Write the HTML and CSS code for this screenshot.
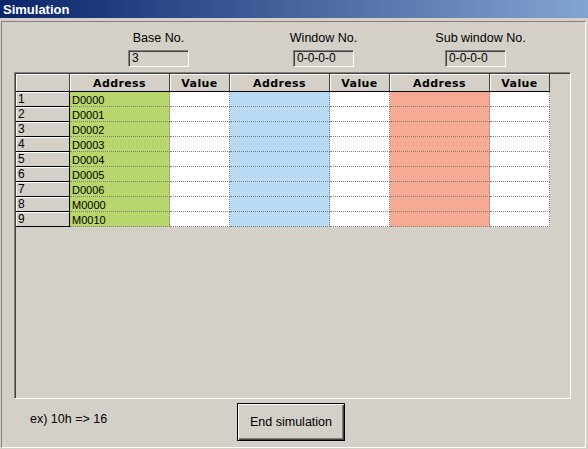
FILE: index.html
```html
<!DOCTYPE html>
<html>
<head>
<meta charset="utf-8">
<link rel="stylesheet" href="styles.css">
</head>
<body>
<div class="titlebar">Simulation</div>
<div class="panel">
  <div class="fields">
    <div class="field f-base">
      <div class="label">Base No.</div>
      <div class="box">3</div>
    </div>
    <div class="field f-win">
      <div class="label">Window No.</div>
      <div class="box">0-0-0-0</div>
    </div>
    <div class="field f-sub">
      <div class="label">Sub window No.</div>
      <div class="box">0-0-0-0</div>
    </div>
  </div>
  <div class="frame">
    <table class="grid">
      <thead>
        <tr>
          <th class="corner"></th>
          <th class="c-addr">Address</th>
          <th class="c-val">Value</th>
          <th class="c-addr">Address</th>
          <th class="c-val">Value</th>
          <th class="c-addr">Address</th>
          <th class="c-val">Value</th>
        </tr>
      </thead>
      <tbody>
        <tr><td class="rh">1</td><td class="g">D0000</td><td class="v"></td><td class="b"></td><td class="v"></td><td class="s"></td><td class="v"></td></tr>
        <tr><td class="rh">2</td><td class="g">D0001</td><td class="v"></td><td class="b"></td><td class="v"></td><td class="s"></td><td class="v"></td></tr>
        <tr><td class="rh">3</td><td class="g">D0002</td><td class="v"></td><td class="b"></td><td class="v"></td><td class="s"></td><td class="v"></td></tr>
        <tr><td class="rh">4</td><td class="g">D0003</td><td class="v"></td><td class="b"></td><td class="v"></td><td class="s"></td><td class="v"></td></tr>
        <tr><td class="rh">5</td><td class="g">D0004</td><td class="v"></td><td class="b"></td><td class="v"></td><td class="s"></td><td class="v"></td></tr>
        <tr><td class="rh">6</td><td class="g">D0005</td><td class="v"></td><td class="b"></td><td class="v"></td><td class="s"></td><td class="v"></td></tr>
        <tr><td class="rh">7</td><td class="g">D0006</td><td class="v"></td><td class="b"></td><td class="v"></td><td class="s"></td><td class="v"></td></tr>
        <tr><td class="rh">8</td><td class="g">M0000</td><td class="v"></td><td class="b"></td><td class="v"></td><td class="s"></td><td class="v"></td></tr>
        <tr><td class="rh">9</td><td class="g">M0010</td><td class="v"></td><td class="b"></td><td class="v"></td><td class="s"></td><td class="v"></td></tr>
      </tbody>
    </table>
  </div>
  <div class="bottom">
    <div class="hint">ex) 10h =&gt; 16</div>
    <div class="btn">End simulation</div>
  </div>
</div>
</body>
</html>
```

FILE: styles.css
```css
html, body {
  margin: 0;
  padding: 0;
}
body {
  width: 588px;
  height: 449px;
  overflow: hidden;
  background: #d4d0c8;
  font-family: "Liberation Sans", Arial, sans-serif;
  color: #000;
}
.titlebar {
  height: 18px;
  line-height: 19px;
  padding-left: 3px;
  background: linear-gradient(to right, #0a246a 0px, #a6caf0 760px);
  color: #fff;
  font-weight: bold;
  font-size: 13px;
  box-sizing: border-box;
}
.panel {
  margin: 3px 2px 0 1px;
  height: 427px;
  box-sizing: border-box;
  border-top: 1px solid #808080;
  border-left: 1px solid #808080;
  border-right: 1px solid #fff;
  border-bottom: 1px solid #fff;
  display: flex;
  flex-direction: column;
}
.fields {
  height: 50px;
  box-sizing: border-box;
  padding-top: 9px;
  display: flex;
}
.field {
  width: 61px;
  display: flex;
  flex-direction: column;
  align-items: center;
}
.f-base { margin-left: 126px; }
.f-win { margin-left: 104px; }
.f-sub { margin-left: 91px; }
.f-sub .label { margin-left: 10px; }
.label {
  font-size: 12.5px;
  line-height: 14px;
  height: 14px;
  white-space: nowrap;
  margin-bottom: 5px;
}
.box {
  width: 61px;
  height: 17px;
  box-sizing: border-box;
  border-top: 1px solid #808080;
  border-left: 1px solid #808080;
  border-right: 1px solid #fff;
  border-bottom: 1px solid #fff;
  box-shadow: inset 1px 1px 0 #404040;
  font-size: 12px;
  line-height: 15px;
  padding-left: 3px;
  white-space: nowrap;
}
.frame {
  margin-left: 12px;
  width: 557px;
  height: 327px;
  box-sizing: border-box;
  border-top: 1px solid #808080;
  border-left: 1px solid #808080;
  border-right: 1px solid #fff;
  border-bottom: 1px solid #fff;
  box-shadow: inset 1px 1px 0 #404040;
  padding: 1px 0 0 1px;
}
.grid {
  border-collapse: separate;
  border-spacing: 0;
  table-layout: fixed;
}
.grid th {
  height: 18px;
  box-sizing: border-box;
  padding: 2px 0 0 0;
  background: #d4d0c8;
  box-shadow: inset 1px 1px 0 #fff;
  border-right: 1px solid #404040;
  border-bottom: 1px solid #000;
  font-family: "DejaVu Sans", sans-serif;
  font-weight: bold;
  font-size: 11px;
  letter-spacing: 0.4px;
  line-height: 15px;
  text-align: center;
  vertical-align: top;
}
.grid th.corner { width: 54px; }
.grid th.c-addr { width: 100px; }
.grid th.c-val { width: 60px; }
.grid td {
  height: 15px;
  box-sizing: border-box;
  padding: 0;
  font-size: 11px;
  line-height: 14px;
  white-space: nowrap;
  border-right: 1px dotted #808080;
  border-bottom: 1px dotted #808080;
  vertical-align: top;
}
.grid td.rh {
  background: #d4d0c8;
  box-shadow: inset 1px 1px 0 #fff;
  border-right: 1px solid #000;
  border-bottom: 1px solid #000;
  padding-left: 2px;
  padding-top: 1px;
  font-size: 12px;
  line-height: 12px;
}
.grid td.g { background: #b9d66c; padding-left: 2px; padding-top: 2px; line-height: 12px; }
.grid td.v { background: #fff; }
.grid td.b { background: #b8daf4; }
.grid td.s { background: #f6aa94; }
.bottom {
  height: 48px;
  display: grid;
  grid-template-columns: 207px 108px;
  padding-left: 28px;
  padding-top: 4px;
  box-sizing: border-box;
}
.hint {
  font-size: 12.5px;
  line-height: 14px;
  padding-top: 9px;
  white-space: nowrap;
}
.btn {
  width: 108px;
  height: 38px;
  box-sizing: border-box;
  border: 1px solid #000;
  box-shadow: inset 1px 1px 0 #fff, inset -1px -1px 0 #404040, inset -2px -2px 0 #808080;
  font-size: 12.5px;
  line-height: 36px;
  text-align: center;
  white-space: nowrap;
}
```
